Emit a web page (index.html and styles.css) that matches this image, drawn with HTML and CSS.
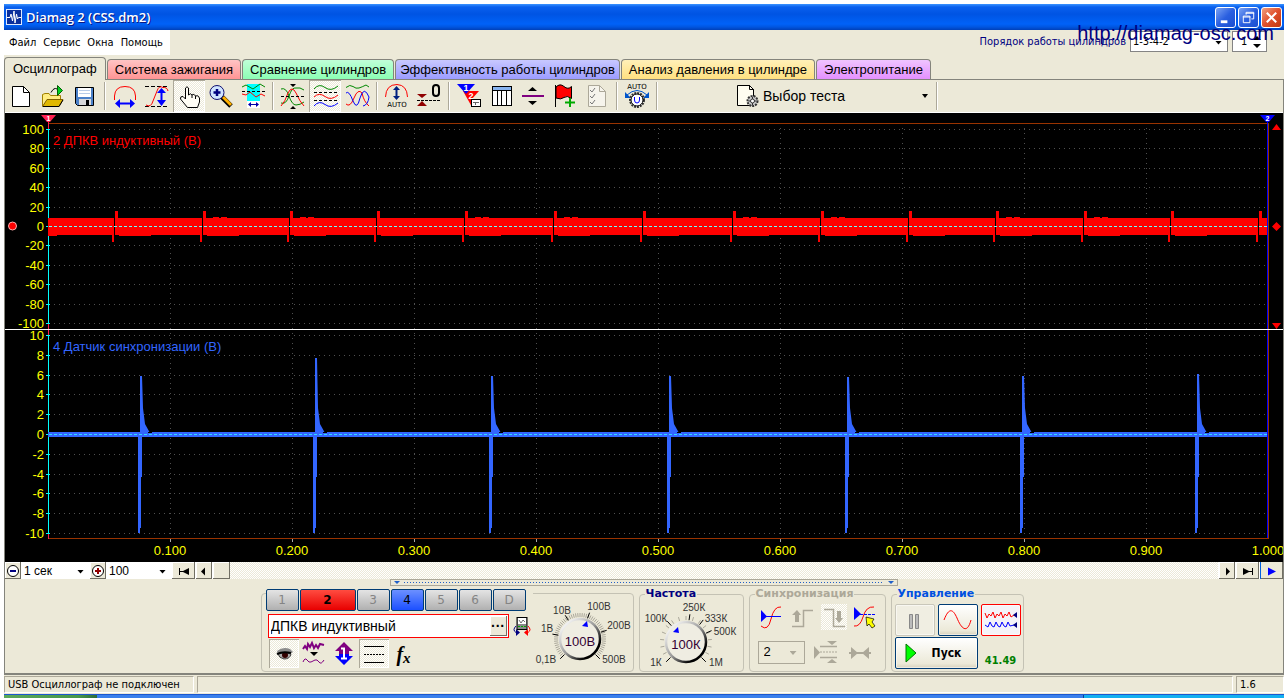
FILE: index.html
```html
<!DOCTYPE html>
<html lang="ru">
<head>
<meta charset="utf-8">
<title>Diamag 2 (CSS.dm2)</title>
<link rel="stylesheet" href="styles.css">
</head>
<body>
<div class="window">
  <header class="titlebar">
    <svg class="app-icon" viewBox="0 0 16 16"><rect width="16" height="16" fill="#dfe8fb"/><rect x="1" y="1" width="14" height="14" fill="#0a2f9c"/><path d="M1 8.500H4L5 5L6.500 12L8 2L9 14L10.500 5L11.500 10L12.500 8.500H15" fill="none" stroke="#fff"/></svg>
    <h1 class="title">Diamag 2 (CSS.dm2)</h1>
    <div class="window-buttons">
      <button class="wbtn" aria-label="Свернуть"><svg viewBox="0 0 18 18"><rect x="4" y="12" width="7" height="3" fill="#fff"/></svg></button>
      <button class="wbtn" aria-label="Восстановить"><svg viewBox="0 0 18 18" fill="none" stroke="#fff"><path d="M6.500 6V3.500H14.500V10.500H12M6 4.500H15"/><path d="M3.500 7.500H10.500V14.500H3.500ZM3 8.500H11"/></svg></button>
      <button class="wbtn close" aria-label="Закрыть"><svg viewBox="0 0 18 18"><path d="M4 4L14 14M14 4L4 14" stroke="#fff" stroke-width="2.200"/></svg></button>
    </div>
  </header>

  <div class="menubar">
    <nav class="menu">
      <button>Файл</button><button>Сервис</button><button>Окна</button><button>Помощь</button>
    </nav>
    <div class="order">
      <label for="order">Порядок работы цилиндров</label>
      <div class="combo order-combo"><select id="order"><option>1-3-4-2</option></select></div>
      <div class="spinner"><input type="text" value="1" aria-label="Цилиндр"><svg viewBox="0 0 8 14"><path d="M0 5H8L4 1ZM0 9H8L4 13Z"/></svg></div>
    </div>
    <a class="site" href="http://diamag-osc.com">http://diamag-osc.com</a>
  </div>

  <div class="tabs" role="tablist">
    <button class="tab active" role="tab" aria-selected="true">Осциллограф</button>
    <button class="tab pink" role="tab">Система зажигания</button>
    <button class="tab green" role="tab">Сравнение цилиндров</button>
    <button class="tab blue" role="tab">Эффективность работы цилиндров</button>
    <button class="tab yellow" role="tab">Анализ давления в цилиндре</button>
    <button class="tab violet" role="tab">Электропитание</button>
  </div>

  <main class="frame">
    <div class="toolbar">
      <button class="tool" aria-label="Новый"><svg viewBox="0 0 32 32"><path d="M7.500 6.500H18.500L24.500 12.500V26.500H7.500Z" fill="#fff" stroke="#000"/><path d="M18.500 6.500V12.500H24.500" fill="none" stroke="#000"/></svg></button>
      <button class="tool" aria-label="Открыть"><svg viewBox="0 0 32 32"><path d="M5.500 26V14.500L8 13.500H12L13.500 15.500H23.500V19" fill="#ffec80" stroke="#a08000"/><path d="M5.500 26.500L10 19.500H26L22 26.500Z" fill="#e0b800" stroke="#806000"/><path d="M6 26.500H22L26 20" fill="none" stroke="#000"/><path d="M14 12.500Q17 7 20 9" fill="none" stroke="#000"/><path d="M20.500 5.500V15.500L25.500 10.500Z" fill="#00d020" stroke="#006000"/></svg></button>
      <button class="tool" aria-label="Сохранить"><svg viewBox="0 0 32 32"><path d="M6.500 7.500H24.500V25.500H8.500L6.500 23.500Z" fill="#4a80c8" stroke="#000"/><rect x="9" y="8" width="13" height="9" fill="#fff"/><path d="M10 10.500H21M10 13.500H21" stroke="#b8cce8"/><rect x="10" y="19" width="12" height="6" fill="#d8d8d8"/><rect x="17" y="20" width="3" height="5" fill="#000"/></svg></button>
      <span class="sep"></span>
      <button class="tool" aria-label="Растянуть по времени"><svg viewBox="0 0 32 32"><path d="M5.500 20V16Q6 6.500 16 6.500Q26 6.500 26.500 16V20" fill="none" stroke="#f00"/><path d="M6 23.500L11 19V22.500H21V19L26 23.500L21 28V24.500H11V28Z" fill="#00f"/></svg></button>
      <button class="tool" aria-label="Растянуть по уровню"><svg viewBox="0 0 32 32"><path d="M4 6.500H27M4 26.500H27" stroke="#000" stroke-dasharray="4 2"/><path d="M5 25Q10 28 12 21L16 11Q18 5 22 7.500Q26 7 27 11" fill="none" stroke="#f00"/><path d="M20.500 8L25 13H21.500V20H25L20.500 26L16 20H19.500V13H16Z" fill="#00f"/></svg></button>
      <button class="tool pressed" aria-label="Рука"><svg viewBox="0 0 32 32"><path d="M12.500 19V8Q14 5.500 15.500 8V15Q17.500 12.500 19 15Q21 13 22.500 16Q25 14.500 26.500 18V22L24.500 27.500H14.500L7.500 19Q7 16 10 16.500Z" fill="#fffdf5" stroke="#000"/><path d="M19 15V18M22.500 16V19" stroke="#000"/></svg></button>
      <button class="tool" aria-label="Масштаб"><svg viewBox="0 0 32 32"><path d="M17 17L26 26" stroke="#000" stroke-width="5"/><path d="M18 17L26 25" stroke="#ffb000" stroke-width="3"/><circle cx="12" cy="12.500" r="7" fill="#cfe4ff" stroke="#101070"/><path d="M12 9V16M8.500 12.500H15.500" stroke="#000080" stroke-width="2.500"/></svg></button>
      <button class="tool" aria-label="Интервал"><svg viewBox="0 0 32 32"><rect x="10" y="4" width="13" height="24" fill="#0ff"/><path d="M5 7L9 5L16 9L23 4L28 7" fill="none" stroke="#080"/><path d="M5 11.500H28" stroke="#000" stroke-dasharray="3 2"/><path d="M5 14L9 15L13 12L19 17L24 14L28 16" fill="none" stroke="#f00"/><rect x="10" y="21" width="13" height="7" fill="#fff"/><path d="M11 24.500L14 22V24H19V22L22 24.500L19 27V25H14V27Z" fill="#00a"/></svg></button>
      <span class="sep"></span>
      <button class="tool" aria-label="Совместить"><svg viewBox="0 0 32 32"><path d="M4 9Q9 7 12 16T19 25Q23 25 27 22" fill="none" stroke="#080"/><path d="M4 23Q9 25 12 16T19 8Q23 7 27 10" fill="none" stroke="#080" /><path d="M4 26Q8 22 11 13Q15 5 19 13Q23 22 27 26" fill="none" stroke="#f00"/><path d="M4 16.500H28" stroke="#000" stroke-dasharray="3 2"/><path d="M13 4H19L16 7ZM13 29H19L16 26Z"/></svg></button>
      <button class="tool pressed" aria-label="Раздельно"><svg viewBox="0 0 32 32" fill="none"><path d="M5 9Q10 3 16 7.500T29 6" stroke="#080"/><path d="M5 17Q10 12 16 16.500T29 15" stroke="#f00"/><path d="M5 26Q10 20 16 24.500T29 23" stroke="#00f"/><path d="M5 12.500H29M5 20.500H29" stroke="#000" stroke-dasharray="3 2"/></svg></button>
      <button class="tool" aria-label="Вместе"><svg viewBox="0 0 32 32" fill="none"><path d="M5 7.500Q9 4 12 6.500T18 8T25 5L28 7" stroke="#080"/><path d="M5 24Q9 28 13 18Q17 8 21 13Q23 22 28 26" stroke="#f00"/><path d="M5 13Q8 10 12 21Q16 31 19 18Q23 5 28 17Q27 25 22 26" stroke="#00f"/></svg></button>
      <span class="sep"></span>
      <button class="tool" aria-label="Автомасштаб"><svg viewBox="0 0 32 32"><path d="M4.500 17Q5 4.500 16 4.500Q26 5 26.500 17" fill="none" stroke="#f00"/><path d="M15.500 6L19 10H16.500V16H19L15.500 20L12 16H14.500V10H12Z" fill="#002080"/><text x="16" y="27" class="icon-text">AUTO</text></svg></button>
      <button class="tool" aria-label="Ноль"><svg viewBox="0 0 32 32"><path d="M4 14H14L9 18ZM4 26H14L9 21Z" fill="#900000"/><path d="M4 20.500H28" stroke="#000" stroke-dasharray="3 1"/><rect x="20" y="5" width="6" height="11" rx="3" fill="none" stroke="#000" stroke-width="2"/></svg></button>
      <span class="sep"></span>
      <button class="tool" aria-label="Маркеры"><svg viewBox="0 0 32 32"><path d="M10 11H26L18 20L19 27Z" fill="#f00"/><path d="M4 4H22L13 14Z" fill="#00f"/><text x="13" y="11" class="icon-num">1</text><text x="18" y="19" class="icon-num">2</text><rect x="18.500" y="19.500" width="9" height="7" fill="#fff" stroke="#000"/><path d="M20 22.500H26M22.500 22V25" stroke="#666"/></svg></button>
      <button class="tool" aria-label="Таблица"><svg viewBox="0 0 32 32"><rect x="7.500" y="6.500" width="19" height="19" fill="#fff" stroke="#000"/><rect x="8" y="7" width="18" height="3" fill="#88b4f0"/><path d="M8 10.500H26M12.500 10V25M16.500 10V25M21.500 10V25" stroke="#000"/></svg></button>
      <button class="tool" aria-label="Разделитель"><svg viewBox="0 0 32 32"><path d="M5 16H27" stroke="#800080" stroke-width="2"/><path d="M11 11H20L15.500 7ZM11 21H20L15.500 25Z"/></svg></button>
      <button class="tool" aria-label="Метка"><svg viewBox="0 0 32 32"><path d="M6.500 5V27" stroke="#000"/><path d="M7 7Q11 3 15 6.500T22.500 6.500V18.500Q18 15 15 17.500T7 18Z" fill="#f00" stroke="#000"/><path d="M21 18V27M16 22.500H26" stroke="#0a0" stroke-width="2"/></svg></button>
      <button class="tool" aria-label="Отчёт"><svg viewBox="0 0 32 32" fill="none" stroke="#aca899"><path d="M7.500 5.500H18.500L24.500 11.500V26.500H7.500Z" fill="#f6f4ec"/><path d="M18.500 5.500V11.500H24.500"/><path d="M9 10L11 12L14 8M9 16L11 18L14 14M9 22L11 24L14 20" stroke="#777"/></svg></button>
      <span class="sep"></span>
      <button class="tool" aria-label="Автонастройка"><svg viewBox="0 0 32 32"><text x="16" y="9" class="icon-text">AUTO</text><path d="M6 15Q16 6 26 15" fill="none" stroke="#05c"/><path d="M4 12V18H10ZM28 12V18H22Z" fill="#05c"/><circle cx="16" cy="20" r="7" fill="#fff" stroke="#333" stroke-width="2" stroke-dasharray="2 1"/><circle cx="16" cy="20" r="6" fill="#fff" stroke="#000"/><path d="M13.500 17V20Q13.500 23 16 23T18.500 20V17" fill="none" stroke="#00f"/></svg></button>
      <span class="sep"></span>
      <button class="test">
        <svg class="test-icon" viewBox="0 0 22 22"><path d="M.5 .5H12.500L16.500 4.500V20.500H.5Z" fill="#fffdf0" stroke="#000"/><path d="M12.500 0V4.500H17" fill="none" stroke="#000"/><circle cx="15.500" cy="16" r="5" fill="#ccc" stroke="#333" stroke-width="2" stroke-dasharray="2 1"/><path d="M15.500 12V20M11.500 16H19.500" stroke="#333"/><circle cx="15.500" cy="16" r="2" fill="#fff" stroke="#333"/></svg>
        <span>Выбор теста</span><i class="tri"></i>
      </button>
      <span class="sep"></span>
    </div>

    <svg class="chart" id="chart" viewBox="5 113 1278 449" role="img" aria-label="Осциллограмма"></svg>

    <div class="scroller">
      <button class="flat" aria-label="Уменьшить"><svg viewBox="0 0 16 16"><circle cx="8" cy="8" r="5.500" fill="#fff" stroke="#000"/><path d="M5 8H11" stroke="#000080" stroke-width="2"/></svg></button>
      <div class="combo time-combo"><select aria-label="Развёртка"><option>1 сек</option></select></div>
      <button class="flat" aria-label="Увеличить"><svg viewBox="0 0 16 16"><circle cx="8" cy="8" r="5.500" fill="#fff" stroke="#000"/><path d="M5 8H11M8 5V11" stroke="#900000" stroke-width="2"/></svg></button>
      <div class="combo zoom-combo"><select aria-label="Масштаб, %"><option>100</option></select></div>
      <button class="flat wide" aria-label="В начало"><svg viewBox="0 0 16 16"><path d="M3 5H4V12H3ZM4 8H8V9H4ZM6 8.500L13 5V12Z"/></svg></button>
      <button class="flat" aria-label="Назад"><svg viewBox="0 0 16 16"><path d="M5 8.500L9 4.500V12.500Z"/></svg></button>
      <div class="track"><div class="thumb"></div></div>
      <button class="flat" aria-label="Вперёд"><svg viewBox="0 0 16 16"><path d="M11 8.500L7 4.500V12.500Z"/></svg></button>
      <button class="flat wide" aria-label="В конец"><svg viewBox="0 0 16 16"><path d="M13 5H12V12H13ZM12 8H8V9H12ZM10 8.500L3 5V12Z"/></svg></button>
      <button class="flat wide play" aria-label="Воспроизвести"><svg viewBox="0 0 16 16"><path d="M12 8.500L4 4.500V12.500Z" fill="#00f"/></svg></button>
    </div>

    <div class="splitter"><i></i><span></span><i></i></div>

    <div class="panels">
      <section class="group channels">
        <div class="channel-main">
          <div class="channel-row">
            <button class="ch">1</button><button class="ch red">2</button><button class="ch">3</button><button class="ch blue">4</button><button class="ch">5</button><button class="ch">6</button><button class="ch">D</button>
          </div>
          <div class="name-row">
            <div class="name-box"><input type="text" value="ДПКВ индуктивный" aria-label="Датчик"><button aria-label="Выбрать датчик">···</button></div>
            <button class="swap" aria-label="Поменять"><svg viewBox="0 0 18 19"><rect x="4" y=".5" width="10" height="12" fill="#888" stroke="#000"/><rect x="5" y="1" width="8" height="6" fill="#fff"/><path d="M6 3L8 6L10 3L12 5" fill="none" stroke="#333" stroke-width=".7"/><path d="M5 9.500H13" stroke="#0a0" stroke-dasharray="2 1"/><path d="M3 9Q-1 13 3 15.500" fill="none" stroke="#000080"/><path d="M3 12V19L7 15.500Z" fill="#000080"/><path d="M15 9Q19 13 15 15.500" fill="none" stroke="#f00"/><path d="M15 12V19L11 15.500Z" fill="#f00"/></svg></button>
          </div>
          <div class="icon-row">
            <button class="mini pressed" aria-label="Показать"><svg viewBox="0 0 30 28"><path d="M8 11Q14 6 21 9L24 12L21 14H9Z" fill="#8c8c8c"/><path d="M9 14Q15 11 22 14Q21 19 15 19Q10 18 9 14Z" fill="#aaa" stroke="#444"/><circle cx="16" cy="15" r="3" fill="#300"/><path d="M8 14Q14 11 22 13" fill="none" stroke="#000" stroke-width="2"/></svg></button>
            <button class="mini" aria-label="Фильтр"><svg viewBox="0 0 30 28" fill="none"><path d="M4 9L6 6L8 9L9 4L11 7L13 3L15 8L17 5L19 8L21 4L25 5" stroke="#800080" stroke-width="2"/><path d="M11 12H19L15 16Z" fill="#000"/><path d="M4 22Q6 17 8 20T12 22T16 20T20 22T25 20" stroke="#800080"/></svg></button>
            <button class="mini" aria-label="Инвертировать"><svg viewBox="0 0 30 28"><path d="M15 2L24 11H20V14H10V11H6Z" fill="#800080"/><path d="M15 25L24 16H20V14H10V16H6Z" fill="#00f"/><path d="M12 8.500H15V19M12 18.500H18" fill="none" stroke="#fff" stroke-width="2"/></svg></button>
            <button class="mini pressed" aria-label="Уровни"><svg viewBox="0 0 30 28"><path d="M5 6.500H25M5 22.500H25" stroke="#000"/><path d="M5 14.500H25" stroke="#000" stroke-dasharray="2 1"/></svg></button>
            <button class="mini fx" aria-label="Функция">f<sub>x</sub></button>
          </div>
        </div>
        <svg class="dial" id="dial-volt" viewBox="534 595 100 77" role="img" aria-label="Напряжение 100В"></svg>
      </section>

      <fieldset class="group freq"><legend>Частота</legend>
        <svg class="dial" id="dial-freq" viewBox="639 602 103 70" role="img" aria-label="Частота 100К"></svg>
      </fieldset>

      <fieldset class="group sync"><legend>Синхронизация</legend>
        <div class="sync-row">
          <button class="mini" aria-label="Уровень"><svg viewBox="0 0 26 26"><path d="M3 22Q10 28 13 15Q16 2 23 3" fill="none" stroke="#f00"/><path d="M3 6V18L9 12.500Z" fill="#00f"/><path d="M8 12.500H23" stroke="#00f"/></svg></button>
          <button class="mini" aria-label="Фронт"><svg viewBox="0 0 26 26"><path d="M3 22.500H14.500V6.500H24" fill="none" stroke="#aca899" stroke-width="1.500"/><path d="M8 6L12 11H10V18H6V11H3Z" fill="#aca899"/></svg></button>
          <button class="mini dither" aria-label="Спад"><svg viewBox="0 0 26 26"><path d="M3 5.500H12.500V22.500H24" fill="none" stroke="#aca899" stroke-width="1.500"/><path d="M18 19L22 14H20V7H16V14H14Z" fill="#aca899"/></svg></button>
          <button class="mini" aria-label="Ручной"><svg viewBox="0 0 26 26"><path d="M2 22Q8 23 11 13Q14 2 22 3" fill="none" stroke="#f00"/><path d="M2 3V16L9 10Z" fill="#00f"/><path d="M8 10.500H23" stroke="#00f" stroke-dasharray="3 1"/><path d="M14 13L22 15L20 18L23 22L20 24L17 20L15 22Z" fill="#ff0" stroke="#000" stroke-width=".7"/></svg></button>
        </div>
        <div class="sync-row">
          <div class="combo sync-combo"><select aria-label="Канал синхронизации" disabled><option>2</option></select></div>
          <button class="mini" aria-label="Окно"><svg viewBox="0 0 26 26" fill="#aca899"><path d="M1 7V20L7 13.500ZM14 2H24L19 6ZM14 24H24L19 20Z"/><path d="M7 7.500H24M7 18.500H24" stroke="#aca899" stroke-width="1.500"/><path d="M7 13H24" stroke="#aca899" stroke-dasharray="2 1"/></svg></button>
          <button class="mini" aria-label="Ширина"><svg viewBox="0 0 26 26"><path d="M4 8L11 14L4 20ZM22 8L15 14L22 20Z" fill="#aca899"/><path d="M2 14H24" stroke="#aca899" stroke-width="2"/></svg></button>
        </div>
      </fieldset>

      <fieldset class="group control"><legend>Управление</legend>
        <div class="control-grid">
          <button class="xp off" aria-label="Пауза"><svg viewBox="0 0 38 30"><path d="M13.500 9.500H16.500V23.500H13.500ZM19.500 9.500H22.500V23.500H19.500Z" fill="#bbb" stroke="#888"/></svg></button>
          <button class="xp" aria-label="Одиночный"><svg viewBox="0 0 38 30"><path d="M5 15C10 2 14 4 18 13C22 23 28 30 32 15" fill="none" stroke="#f00"/></svg></button>
          <button class="xp live" aria-label="Непрерывный"><svg viewBox="0 0 38 30" fill="none"><path d="M3 8L5 13L7 9L9 11L11 7L13 13L15 9L17 11L19 7L21 13L23 9L25 11L27 7L29 12L32 10" stroke="#f00"/><path d="M3 20L6 22L8 17L10 21L12 22L14 17L16 21L18 22L20 17L22 21L24 22L26 17L28 21L32 20" stroke="#00f"/><path d="M31 10L35 7V13ZM31 20L35 17V23Z" fill="#000080"/></svg></button>
          <button class="xp start"><svg viewBox="0 0 12 20"><path d="M1 1L11 10L1 19Z" fill="#0f0" stroke="#070"/></svg><span>Пуск</span></button>
          <output class="fps">41.49</output>
        </div>
      </fieldset>
    </div>
  </main>

  <footer class="status">
    <span class="cell">USB Осциллограф не подключен</span><span class="cell"></span><span class="cell">1.6</span>
  </footer>
  <div class="taskbar"><span class="start-strip"></span><span class="tasks"></span><span class="tray"></span></div>
</div>
<script src="chart.js"></script>
</body>
</html>
```

FILE: styles.css
```css
* { box-sizing: border-box; }
body { margin: 0; background: #fff; color: #000; font: 11px/14px "DejaVu Sans Condensed", "DejaVu Sans", sans-serif; overflow: hidden; }
button, input, select { font: inherit; color: inherit; margin: 0; padding: 0; border: 0; border-radius: 0; background: none; }
button svg { display: block; }
.window { margin: 4px 4px 0; background: #ece9d8; }

.titlebar { display: flex; align-items: center; height: 26px; padding: 0 2px; color: #fff; background: linear-gradient(#3a93ff 0, #0a60ee 3px, #0054e3 10px, #0062f8 20px, #0055e0 23px, #0040b8 26px); }
.app-icon { width: 16px; height: 16px; }
.title { flex: 1; margin: 0 4px; font: 600 13px/18px "Open Sans", sans-serif; text-shadow: 1px 1px #0a1883; }
.window-buttons { display: flex; gap: 2px; }
.wbtn { width: 21px; height: 21px; padding: 1px; border: 1px solid #fff; border-radius: 3px; background: linear-gradient(135deg, #7ba3f3, #2a5fe0 50%, #1a4fd0); }
.wbtn svg { width: 17px; height: 17px; }
.wbtn.close { background: linear-gradient(135deg, #f0a080, #e0502c 50%, #c03810); }

.menubar { display: flex; justify-content: space-between; align-items: flex-start; height: 27px; position: relative; }
.menu { display: flex; gap: 7px; height: 25px; padding: 0 7px 0 5px; background: #fff; }
.order { display: flex; align-items: center; padding: 1px 17px 0 0; gap: 4px; color: #000080; }
.site { position: absolute; right: 10px; top: -9px; font: 20px/24px "Liberation Sans", sans-serif; color: #000080; text-decoration: none; }

.combo { position: relative; display: flex; background: #fff; color: #000; }
.combo select { appearance: none; width: 100%; padding: 0 14px 0 2px; }
.combo::after, .tri { content: ""; width: 7px; height: 4px; background: #000; clip-path: polygon(0 0, 100% 0, 50% 100%); }
.combo::after { position: absolute; right: 5px; top: 50%; margin-top: -1px; pointer-events: none; }
.order-combo, .spinner { height: 21px; border: 1px solid #848484; }
.order-combo { width: 98px; }
.spinner { display: flex; align-items: center; width: 35px; padding: 0 5px; background: #fff; color: #000; }
.spinner input { width: 100%; min-width: 0; padding-left: 3px; }
.spinner svg { width: 8px; height: 14px; flex: none; }

.tabs { display: flex; align-items: flex-end; gap: 1px; height: 22px; }
.tab { height: 20px; padding: 0 7px; border: 1px solid #84847c; border-bottom: 0; border-radius: 4px 4px 0 0; font: 13px/18px "Liberation Sans", sans-serif; white-space: nowrap; }
.tab.active { height: 23px; padding: 0 8px; background: #ece9d8; margin-bottom: -1px; position: relative; }
.pink { background: linear-gradient(#ffc4c4, #ff9494); }
.green { background: linear-gradient(#c0ffd8, #8cffb4); }
.tab.blue { padding: 0 4px; background: linear-gradient(#c8c8ff, #9c9cff); }
.yellow { background: linear-gradient(#fff0b8, #ffe080); }
.violet { background: linear-gradient(#f0c4ff, #e490ff); }

.frame { border: 1px solid #84847c; border-width: 1px 1px 2px; }
.toolbar { display: flex; height: 33px; border-bottom: 1px solid #fff; }
.tool { flex: none; width: 32px; height: 32px; }
.tool svg { width: 32px; height: 32px; }
.pressed, .dither, .track { background: repeating-conic-gradient(#fff 0 25%, #ece9d8 0 50%) 0 0 / 2px 2px; }
.pressed { box-shadow: inset 1px 1px #aca899, inset -1px -1px #fff; }
.sep { flex: none; width: 2px; height: 28px; margin: 2px 3px; border-left: 1px solid #aca899; border-right: 1px solid #fff; }
.icon-text { font: 7px "DejaVu Sans", sans-serif; text-anchor: middle; }
.icon-num { font: bold 9px "Liberation Sans", sans-serif; text-anchor: middle; fill: #fff; }
.test { display: flex; align-items: center; gap: 4px; width: 272px; padding: 0 5px 0 76px; font: 14px/18px "Liberation Sans", sans-serif; }
.test span { flex: 1; text-align: left; }
.test-icon { width: 22px; height: 22px; }
.test .tri { width: 6px; height: 4px; }

.chart { display: block; width: 100%; background: #000; font: 13px "Liberation Sans", sans-serif; }
.dial { display: block; flex: none; font: 10px "Liberation Sans", sans-serif; }
.dial .value { font-size: 13px; }

.scroller { display: flex; height: 17px; gap: 1px; background: #fff; font: 12px/16px "Liberation Sans", sans-serif; }
.flat { flex: none; width: 16px; height: 17px; background: #ece9d8; box-shadow: inset -1px -1px #716f64, inset 1px 1px #fff; }
.flat svg { width: 16px; height: 16px; margin: auto; }
.flat.wide { width: 23px; }
.flat.play { box-shadow: inset 1px 0 #0060e0, inset -1px -1px #716f64; }
.time-combo { width: 67px; }
.zoom-combo { width: 64px; }
.track { flex: 1; }
.thumb { width: 17px; height: 17px; background: #ece9d8; box-shadow: inset -1px -1px #716f64, inset 1px 1px #fff; }

.splitter { display: flex; align-items: center; justify-content: space-between; width: 508px; height: 7px; margin: 0 auto; padding: 0 3px; border: 1px solid #aca899; }
.splitter i { width: 6px; height: 3px; background: #2060c8; clip-path: polygon(0 0, 100% 0, 50% 100%); }
.splitter span { flex: 1; height: 1px; margin: 0 4px; background: repeating-linear-gradient(90deg, #2060c8 0 1px, transparent 1px 3px); }

.panels { display: flex; justify-content: center; align-items: flex-end; gap: 5px; height: 87px; padding: 0 4px 1px 0; }
.group { margin: 0; padding: 0; min-width: 0; border: 1px solid #c4c2b4; border-radius: 4px; }
.group legend { margin-left: 5px; padding: 0 1px; font: bold 11px/14px "DejaVu Sans", sans-serif; }
.channels { display: flex; width: 373px; height: 79px; }
.channel-main { width: 271px; margin-top: -5px; height: 82px; }
.channel-row { display: flex; gap: 1px; margin-left: 4px; background: #ece9d8; }
.ch { width: 33px; height: 22px; border: 1px solid #003c74; border-radius: 2px; background: linear-gradient(#e4e4e4, #b0b0b0); color: #848484; font: 12px/18px "DejaVu Sans", sans-serif; }
.ch.red { width: 56px; background: linear-gradient(#ff4c40, #e80000); color: #000; font-weight: bold; }
.ch.blue { background: linear-gradient(#6c90ff, #1c50ff); color: #000; }
.name-row { display: flex; align-items: center; gap: 4px; padding: 3px 0 1px 6px; }
.name-box { display: flex; width: 241px; height: 24px; padding: 1px; border: 1px solid #f00; background: #fff; font: 14px/18px "Liberation Sans", sans-serif; }
.name-box input { flex: 1; min-width: 0; padding-left: 1px; }
.name-box button { width: 17px; background: #ece9d8; box-shadow: inset -1px -1px #716f64, inset 1px 1px #fff; font-weight: bold; line-height: 14px; }
.swap svg { width: 18px; height: 19px; }
.icon-row { display: flex; padding-left: 7px; }
.mini { flex: none; width: 30px; height: 29px; }
.mini svg { width: 30px; height: 28px; }
.fx { font: italic bold 20px/24px "Liberation Serif", serif; }
.fx sub { font-size: 15px; line-height: 0; vertical-align: -2px; }
.freq { width: 105px; color: #000080; }
.sync { width: 137px; color: #aca899; }
.control { width: 133px; color: #0050e0; }
.channels .dial { width: 100px; height: 77px; }
.freq .dial { width: 103px; height: 70px; }
.sync-row { display: flex; align-items: center; justify-content: space-between; height: 32px; padding: 0 6px 0 8px; }
.sync-row:last-child { height: 38px; padding-right: 12px; }
.sync-row .mini, .sync-row .mini svg { width: 26px; height: 26px; }
.sync-combo { width: 47px; height: 23px; border: 1px solid #aca899; background: #ece9d8; }
.sync-combo select { padding-left: 5px; color: #000; opacity: 1; font: 13px/18px "Liberation Sans", sans-serif; }
.sync-combo::after { right: 7px; background: #aca899; }
.control-grid { display: grid; grid-template-columns: 40px 40px 40px; grid-template-rows: 32px 32px; gap: 1px 3px; padding: 3px 3px 2px; }
.xp { display: flex; align-items: center; border: 1px solid #003c74; border-radius: 2px; background: linear-gradient(#fff, #ece9d8 85%, #d8d2bd); box-shadow: inset 0 0 0 1px #fff8; }
.xp svg { width: 38px; height: 30px; }
.xp.off { border-color: #c9c7ba; background: #f0eee2; }
.xp.live { border-color: #f00; background: #f4f3f8; }
.xp.start { grid-column: span 2; padding-left: 9px; }
.xp.start svg { width: 12px; height: 20px; }
.xp.start span { flex: 1; color: #000; font: bold 12px/16px "DejaVu Sans Condensed", sans-serif; text-align: center; }
.fps { align-self: end; padding-bottom: 1px; text-align: center; color: #008000; font: bold 11px/14px "DejaVu Sans Condensed", sans-serif; }

.status { display: flex; gap: 3px; height: 19px; padding: 1px 0 1px; }
.cell { height: 17px; padding: 1px 3px; border: 1px solid #aca899; border-color: #aca899 #fff #fff #aca899; }
.cell:nth-child(1) { width: 190px; }
.cell:nth-child(2) { flex: 1; }
.cell:nth-child(3) { width: 48px; }
.taskbar { display: flex; height: 4px; border-top: 1px solid #1c58d0; }
.start-strip { width: 93px; background: linear-gradient(90deg, #5aa85a, #48984a 80%, #2c6c38); }
.tasks { flex: 1; background: #3a80ec; }
.tray { width: 201px; background: #14b0f0; border-left: 1px solid #0c4098; }
```

FILE: chart.js
```js
const NS = "http://www.w3.org/2000/svg";

function add(parent, tag, attrs, text) {
  const el = document.createElementNS(NS, tag);
  for (const k in attrs) el.setAttribute(k, attrs[k]);
  if (text !== undefined) el.textContent = text;
  parent.appendChild(el);
  return el;
}

function drawChart() {
  const c = document.getElementById("chart");
  const path = (d, stroke, extra) => add(c, "path", Object.assign({ d, stroke, fill: "none" }, extra));
  const fill = (d, color) => add(c, "path", { d, fill: color });
  const label = (x, y, t, color, anchor) => add(c, "text", { x, y, fill: color, "text-anchor": anchor }, t);

  const rowsA = [129, 148, 168, 187, 207, 226, 245, 265, 284, 304, 323];
  const rowsB = [335, 355, 375, 394, 414, 434, 454, 474, 493, 513, 533];
  const grid = { "stroke-dasharray": "1 4", "shape-rendering": "crispEdges" };

  rowsA.concat(rowsB).forEach(y => path(`M54 ${y + 0.5}H1267`, "#505050", grid));
  for (let i = 1; i < 10; i++) {
    const x = 48.5 + 122 * i;
    path(`M${x} 128V538`, "#505050", grid);
    path(`M${x} 539V542`, "#aaa");
  }
  for (let i = 1; i <= 10; i++) label(48 + 122 * i, 555, (i / 10).toFixed(3), "#ff0", "middle");

  path("M49 123.500H1268.500V538.500H49", "#993300", { "shape-rendering": "crispEdges" });
  path("M48.500 118V539", "#ff2050");
  path("M48.500 129V323M48.500 335V533", "#0ff");
  rowsA.forEach((y, i) => { path(`M46 ${y + 0.5}H50`, "#0ff"); label(44, y + 5, 100 - i * 20, "#ff0", "end"); });
  rowsB.forEach((y, i) => { path(`M46 ${y + 0.5}H50`, "#0ff"); label(44, y + 5, 10 - i * 2, "#ff0", "end"); });

  // Channel 2: noise band with a gap and a pulse at every missing tooth
  fill("M48 218H1267V235H48Z", "#f00");
  fill("M48 235H57V236H48Z", "#f00");
  [113, 201, 288, 375, 463, 552, 641, 731, 819, 907, 994, 1082, 1169, 1257].forEach((x, i) => {
    fill(`M${x + 1} 218H${x + 2}V226L${x + 2} 236H${x + 1}Z`, "#000");
    fill(`M${x - 1} 226H${x + 1}V242H${x - 1}ZM${x + 2} 211H${x + 5}V226H${x + 2}Z`, "#f00");
    if (x < 1250) fill(`M${x + 6} 235H${x + 38}V236H${x + 6}Z`, "#f00");
    if (i % 3 !== 0 && x < 1200) fill(`M${x + 12} 217H${x + 18}V218H${x + 12}ZM${x + 20} 217H${x + 26}V218H${x + 20}Z`, "#f00");
  });
  path("M49 226.500H1267", "#6ff", { "stroke-dasharray": "3 2" });

  // Channel 4: sync sensor pulses
  fill("M48 432H1267V437H48Z", "#3366ff");
  [[138, 376], [313, 358], [489, 376], [667, 376], [845, 377], [1020, 376], [1195, 374]].forEach(([x, top]) => {
    fill(`M${x} 434H${x + 4}V477H${x + 3}V528H${x + 2}V533H${x}Z`, "#3366ff");
    fill(`M${x + 2} ${top}H${x + 4}L${x + 5} 408L${x + 7} 424L${x + 12} 433V436H${x + 2}Z`, "#3366ff");
    fill(`M${x + 10} 432H${x + 14}V433H${x + 10}Z`, "#000");
  });
  path("M49 434.500H1267", "#3df", { "stroke-dasharray": "3 2" });

  label(53, 145, "2 ДПКВ индуктивный (В)", "#f00", "start");
  label(53, 351, "4 Датчик синхронизации (В)", "#3366ff", "start");

  path("M1267.500 118V538", "#00f");
  path("M5 329.500H1283", "#fff");
  fill("M41 115H56L50 122H47Z", "#ff2050");
  fill("M1260 115H1275L1269 122H1266Z", "#00f");
  const num = (x, t) => add(c, "text", { x, y: 121, fill: "#fff", "text-anchor": "middle", "font-size": 7, "font-weight": "bold" }, t);
  num(48.5, "1");
  num(1267.5, "2");
  fill("M1272 130H1281L1276.500 124ZM1272 226.500L1276.500 222L1281 226.500L1276.500 231ZM1272 323H1281L1276.500 329Z", "#f00");
  add(c, "circle", { cx: 12.5, cy: 226, r: 4, fill: "#f00", stroke: "#ffb0b0" });
}

function drawDial(id, cx, cy, value, pointer, labels, ticks) {
  const d = document.getElementById(id);
  const defs = add(d, "defs", {});
  const g = add(defs, "linearGradient", { id: id + "-rim", x1: 0, y1: 0, x2: 1, y2: 1 });
  add(g, "stop", { offset: 0.15, "stop-color": "#eee" });
  add(g, "stop", { offset: 0.5, "stop-color": "#999" });
  add(g, "stop", { offset: 0.8, "stop-color": "#000" });
  const ray = (deg, r1, r2, color) => {
    const a = deg * Math.PI / 180, s = Math.sin(a), k = -Math.cos(a);
    add(d, "path", { d: `M${cx + r1 * s} ${cy + r1 * k}L${cx + r2 * s} ${cy + r2 * k}`, stroke: color });
  };
  for (let i = 0; i <= ticks; i++) ray(-135 + 270 * i / ticks, 22, 26, "#aaa79a");
  labels.forEach(([deg, x, y, t]) => {
    ray(deg, 22, 28, "#000");
    add(d, "text", { x, y, fill: "#333", "text-anchor": "middle" }, t);
  });
  add(d, "circle", { cx, cy, r: 20, fill: "#efede2", stroke: `url(#${id}-rim)`, "stroke-width": 2.5 });
  add(d, "path", { d: "M-3 2L3 3L2 -3Z", fill: "#00f", transform: `translate(${pointer})` });
  add(d, "text", { x: cx, y: cy + 7, class: "value", "text-anchor": "middle", fill: "#303" }, value);
}

drawChart();
drawDial("dial-volt", 581, 640, "100В", "586 625",
  [[-135, 547, 664, "0,1В"], [-80, 548, 633, "1В"], [-32, 563, 615, "10В"], [20, 600, 611, "100В"], [72, 620, 630, "200В"], [135, 615, 664, "500В"]], 54);
drawDial("dial-freq", 685, 643, "100К", "675 631",
  [[-135, 655, 667, "1К"], [-42, 655, 623, "100К"], [8, 693, 612, "250К"], [38, 715, 623, "333К"], [66, 724, 636, "500К"], [135, 715, 667, "1М"]], 16);
```
